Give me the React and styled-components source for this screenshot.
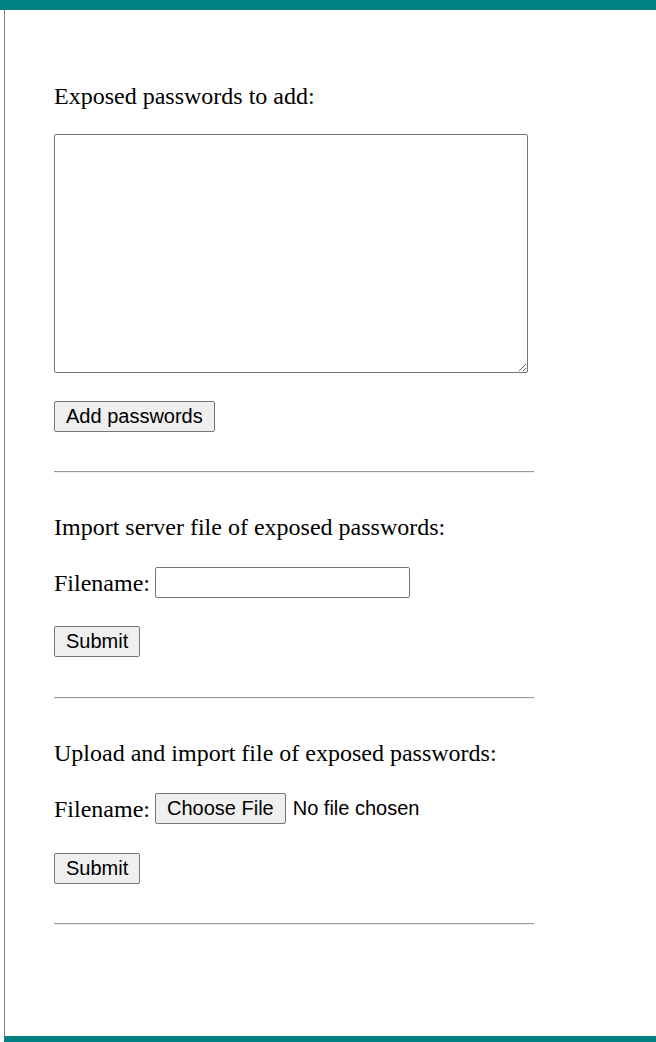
import styled, { createGlobalStyle } from "styled-components";

const GlobalStyle = createGlobalStyle`
  body {
    margin: 0;
    background: #fff;
    font-family: "Liberation Serif", "Times New Roman", serif;
    color: #000;
  }
`;

const App = () => {
  return (
    <>
      <GlobalStyle />
      <TopBar />
      <Frame>
        <Content>
          <Label $top={72}>Exposed passwords to add:</Label>
          <TextArea />
          <Button $top={28}>Add passwords</Button>
          <Rule $top={39} />

          <Label $top={40}>Import server file of exposed passwords:</Label>
          <Row>
            <Label as="span">Filename:</Label>
            <TextInput type="text" />
          </Row>
          <Button $top={28}>Submit</Button>
          <Rule $top={40} />

          <Label $top={40}>Upload and import file of exposed passwords:</Label>
          <Row>
            <Label as="span">Filename:</Label>
            <Button>Choose File</Button>
            <FileStatus>No file chosen</FileStatus>
          </Row>
          <Button $top={29}>Submit</Button>
          <Rule $top={39} />
        </Content>
      </Frame>
    </>
  );
};

const TopBar = styled.div`
  height: 10px;
  background: #008080;
`;

const Frame = styled.div`
  margin-left: 4px;
  border-left: 1px solid #808080;
  border-bottom: 6px solid #008080;
  box-sizing: border-box;
  height: 1032px;
`;

const Content = styled.div`
  padding-left: 49px;
  display: flex;
  flex-direction: column;
  align-items: flex-start;
`;

const Label = styled.p`
  margin: ${(p) => p.$top || 0}px 0 0;
  font-size: 24px;
  line-height: 28px;
`;

const TextArea = styled.textarea`
  margin-top: 24px;
  width: 474px;
  height: 239px;
  box-sizing: border-box;
  border: 1px solid #767676;
  border-radius: 2px;
  padding: 2px;
  font-family: "Liberation Mono", monospace;
`;

const Button = styled.button`
  margin-top: ${(p) => p.$top || 0}px;
  height: 31px;
  padding: 0 11px;
  box-sizing: border-box;
  background: #efefef;
  border: 1px solid #767676;
  border-radius: 2px;
  font-family: "Liberation Sans", Arial, sans-serif;
  font-size: 20px;
  color: #000;
`;

const Rule = styled.hr`
  margin: ${(p) => p.$top}px 0 0;
  width: 480px;
  height: 0;
  border: none;
  border-top: 1px solid #9a9a9a;
  border-bottom: 1px solid #eeeeee;
`;

const Row = styled.div`
  margin-top: 26px;
  display: flex;
  align-items: center;
  gap: 5px;
`;

const TextInput = styled.input`
  width: 255px;
  height: 31px;
  box-sizing: border-box;
  border: 1px solid #767676;
  border-radius: 2px;
  font-size: 20px;
`;

const FileStatus = styled.span`
  margin-left: 2px;
  font-family: "Liberation Sans", Arial, sans-serif;
  font-size: 20px;
`;

export default App;
